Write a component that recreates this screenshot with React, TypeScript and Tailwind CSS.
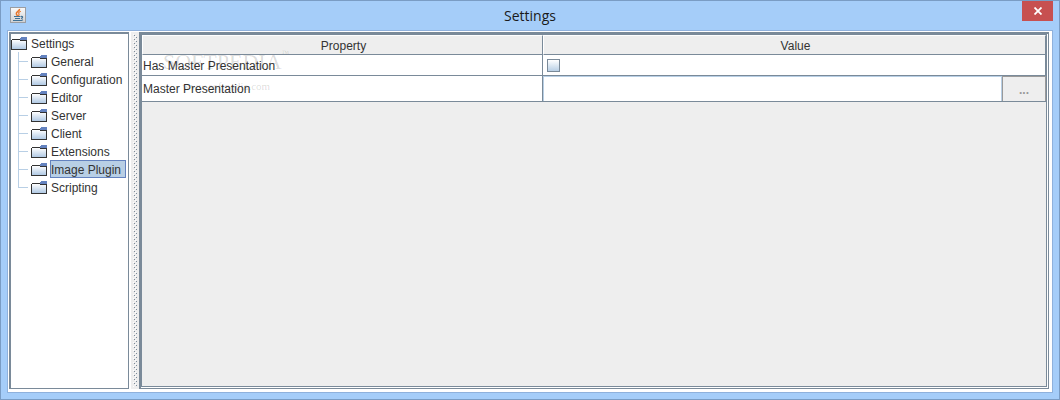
import { useState } from "react";

const SECTIONS = [
  "General",
  "Configuration",
  "Editor",
  "Server",
  "Client",
  "Extensions",
  "Image Plugin",
  "Scripting",
];

function JavaIcon() {
  return (
    <svg width="16" height="16" viewBox="0 0 16 16" aria-hidden="true">
      <defs>
        <linearGradient id="cup-bg" x1="0" y1="0" x2="0" y2="1">
          <stop offset="0" stopColor="#fafafa" />
          <stop offset="1" stopColor="#cfd0d2" />
        </linearGradient>
      </defs>
      <rect x="0.5" y="0.5" width="15" height="15" fill="url(#cup-bg)" stroke="#9a9da3" />
      <path d="M9.500 1.800C10 4 6 4.800 6.300 6.800C6.400 7.800 7.300 8.200 7.400 9" fill="none" stroke="#e8762c" strokeWidth="1.500" />
      <path d="M10.800 4.200C8.800 5 8.200 5.800 9 7C9.400 7.700 9 8.300 8.200 8.900" fill="none" stroke="#e8762c" strokeWidth="1.200" />
      <path d="M4 9.500H10.500M5 11.500H10M3 13.500H11.500L13 12.800M11 9.500C13.300 9 13 11 11 11.500" fill="none" stroke="#3f7196" strokeWidth="1.200" />
    </svg>
  );
}

function FolderIcon() {
  return (
    <svg className="shrink-0" width="16" height="16" viewBox="0 0 16 16" shapeRendering="crispEdges" aria-hidden="true">
      <defs>
        <linearGradient id="folder-face" x1="0" y1="0" x2="0" y2="1">
          <stop offset="0" stopColor="#ffffff" />
          <stop offset="1" stopColor="#b0c9e4" />
        </linearGradient>
      </defs>
      <path d="M10 3h6v2H9V4h1z" fill="#6382bf" />
      <path d="M9 5h7v1H9z" fill="#6382bf" />
      <path d="M1 6h8v1h6v8H1z" fill="url(#folder-face)" />
      <path d="M0 6h1v10H0zM1 5h8v1H1zM9 6h6v1H9zM15 6h1v10h-1zM0 15h16v1H0z" fill="#333333" />
    </svg>
  );
}

function TitleBar() {
  return (
    <header className="flex h-[29px] items-start">
      <div className="flex w-10 pl-[3px] pt-[6px]">
        <JavaIcon />
      </div>
      <h1 className="flex-1 pt-[5px] text-center font-['Open_Sans',sans-serif] text-[14px] leading-5 text-[#1a1a1a]">
        Settings
      </h1>
      <div className="flex w-10 justify-end">
        <button type="button" aria-label="Close" className="flex h-5 w-[31px] items-center justify-center bg-[#c75050]">
          <svg width="8" height="8" viewBox="0 0 8 8" aria-hidden="true">
            <path d="M0.500 0.500L7.500 7.500M7.500 0.500L0.500 7.500" stroke="#ffffff" strokeWidth="1.800" />
          </svg>
        </button>
      </div>
    </header>
  );
}

type NodeLabelProps = {
  text: string;
  active: boolean;
  onSelect: () => void;
};

function NodeLabel({ text, active, onSelect }: NodeLabelProps) {
  return (
    <button
      type="button"
      onClick={onSelect}
      className={
        active
          ? "ml-[3px] h-[18px] border border-[#6382bf] bg-[#b8cfe5] pr-1 leading-[18px] whitespace-nowrap"
          : "ml-[3px] h-[18px] border border-transparent pr-1 leading-[18px] whitespace-nowrap"
      }
    >
      {text}
    </button>
  );
}

function SettingsTree() {
  const [selected, setSelected] = useState("Image Plugin");

  return (
    <nav
      aria-label="Settings sections"
      className="mr-[2px] w-[120px] shrink-0 overflow-hidden border-t-2 border-r border-b border-l-2 border-[#7a8a99] bg-white"
    >
      <div className="flex h-[18px] items-start">
        <FolderIcon />
        <NodeLabel text="Settings" active={selected === "Settings"} onSelect={() => setSelected("Settings")} />
      </div>
      <ul>
        {SECTIONS.map((name, i) => (
          <li key={name} className="flex h-[18px] items-start">
            {/* Branch lines */}
            <span className="mr-[3px] ml-[7px] w-[10px] shrink-0">
              <span className="block h-[10px] border-b border-l border-[#b8cfe5]"></span>
              {i < SECTIONS.length - 1 && <span className="block h-2 border-l border-[#b8cfe5]"></span>}
            </span>
            <FolderIcon />
            <NodeLabel text={name} active={selected === name} onSelect={() => setSelected(name)} />
          </li>
        ))}
      </ul>
    </nav>
  );
}

function Splitter() {
  return (
    <div className="flex w-2 shrink-0 bg-[#eeeeee] py-[2px] pl-[2px]">
      <svg className="w-1" shapeRendering="crispEdges" aria-hidden="true">
        <defs>
          <pattern id="bumps" width="4" height="4" patternUnits="userSpaceOnUse">
            <path d="M0 0h1v1H0zM2 2h1v1H2z" fill="#ffffff" />
            <path d="M1 1h1v1H1zM3 3h1v1H3z" fill="#7a8a99" />
          </pattern>
        </defs>
        <rect width="100%" height="100%" fill="url(#bumps)" />
      </svg>
    </div>
  );
}

function PropertyTable() {
  const [hasMaster, setHasMaster] = useState(false);
  const [master, setMaster] = useState("");

  return (
    <table className="w-full table-fixed border-separate border-spacing-0">
      <thead>
        <tr>
          <th scope="col" className="h-5 w-[401px] border-t border-r border-b border-l border-t-white border-r-[#7a8a99] border-b-[#7a8a99] border-l-white p-0 pt-[2px] pl-[2px] font-normal leading-4">
            Property
          </th>
          <th scope="col" className="h-5 border-t border-r border-b border-l border-t-white border-r-[#7a8a99] border-b-[#7a8a99] border-l-white p-0 pt-[2px] pl-[2px] font-normal leading-4">
            Value
          </th>
        </tr>
      </thead>
      <tbody className="bg-white">
        <tr>
          <td className="h-[21px] border-r border-b border-[#7a8a99] p-0 pt-[2px] pl-px leading-4">
            <label htmlFor="has-master">Has Master Presentation</label>
          </td>
          <td className="h-[21px] border-r border-b border-[#7a8a99] p-0">
            <input
              id="has-master"
              type="checkbox"
              checked={hasMaster}
              onChange={(e) => setHasMaster(e.target.checked)}
              className="ml-1 block size-[13px] appearance-none border border-[#7a8a99] bg-linear-to-b from-white to-[#b8cfe5] checked:bg-[#6382bf]"
            />
          </td>
        </tr>
        <tr>
          <td className="h-[26px] border-r border-b border-[#7a8a99] p-0 pl-px leading-4">
            <label htmlFor="master">Master Presentation</label>
          </td>
          <td className="h-[26px] border-b border-[#7a8a99] p-0">
            <div className="flex h-[25px]">
              <input
                id="master"
                type="text"
                value={master}
                onChange={(e) => setMaster(e.target.value)}
                className="min-w-0 flex-1 border-t border-r border-l border-[#b8cfe5] px-px outline-none"
              />
              <button
                type="button"
                aria-label="Browse"
                disabled
                className="w-11 border-t border-r border-l border-[#999999] bg-[#eeeeee] pt-[2px] font-bold text-[#999999]"
              >
                ...
              </button>
            </div>
          </td>
        </tr>
      </tbody>
    </table>
  );
}

function Watermark() {
  return (
    <div
      aria-hidden="true"
      className="pointer-events-none absolute top-[15px] left-[21px] flex flex-col items-center font-['Liberation_Serif',serif] text-black/15"
    >
      <div className="flex items-start">
        <span className="text-[22px] leading-6">SOFTPEDIA</span>
        <span className="text-[8px] leading-2">™</span>
      </div>
      <div className="text-[11px] leading-6">www.softpedia.com</div>
    </div>
  );
}

export default function App() {
  return (
    <div className="flex min-h-screen flex-col border border-[#7a9cc4] bg-[#a5cdf9] px-[6px] pb-[6px] font-['Liberation_Sans',Arial,sans-serif] text-[12px] text-[#333333]">
      <TitleBar />
      <main className="flex flex-1 border border-[#8fb1dc] bg-white pt-px pr-[3px] pb-[3px] pl-px">
        <SettingsTree />
        <Splitter />
        {/* Double bevel around the table */}
        <section className="flex min-w-0 flex-1 border-t-2 border-r border-b border-l-2 border-[#7a8a99] bg-white pr-px pb-px">
          <div className="relative min-w-0 flex-1 border border-[#7a8a99] bg-[#eeeeee]">
            <PropertyTable />
            <Watermark />
          </div>
        </section>
      </main>
    </div>
  );
}
